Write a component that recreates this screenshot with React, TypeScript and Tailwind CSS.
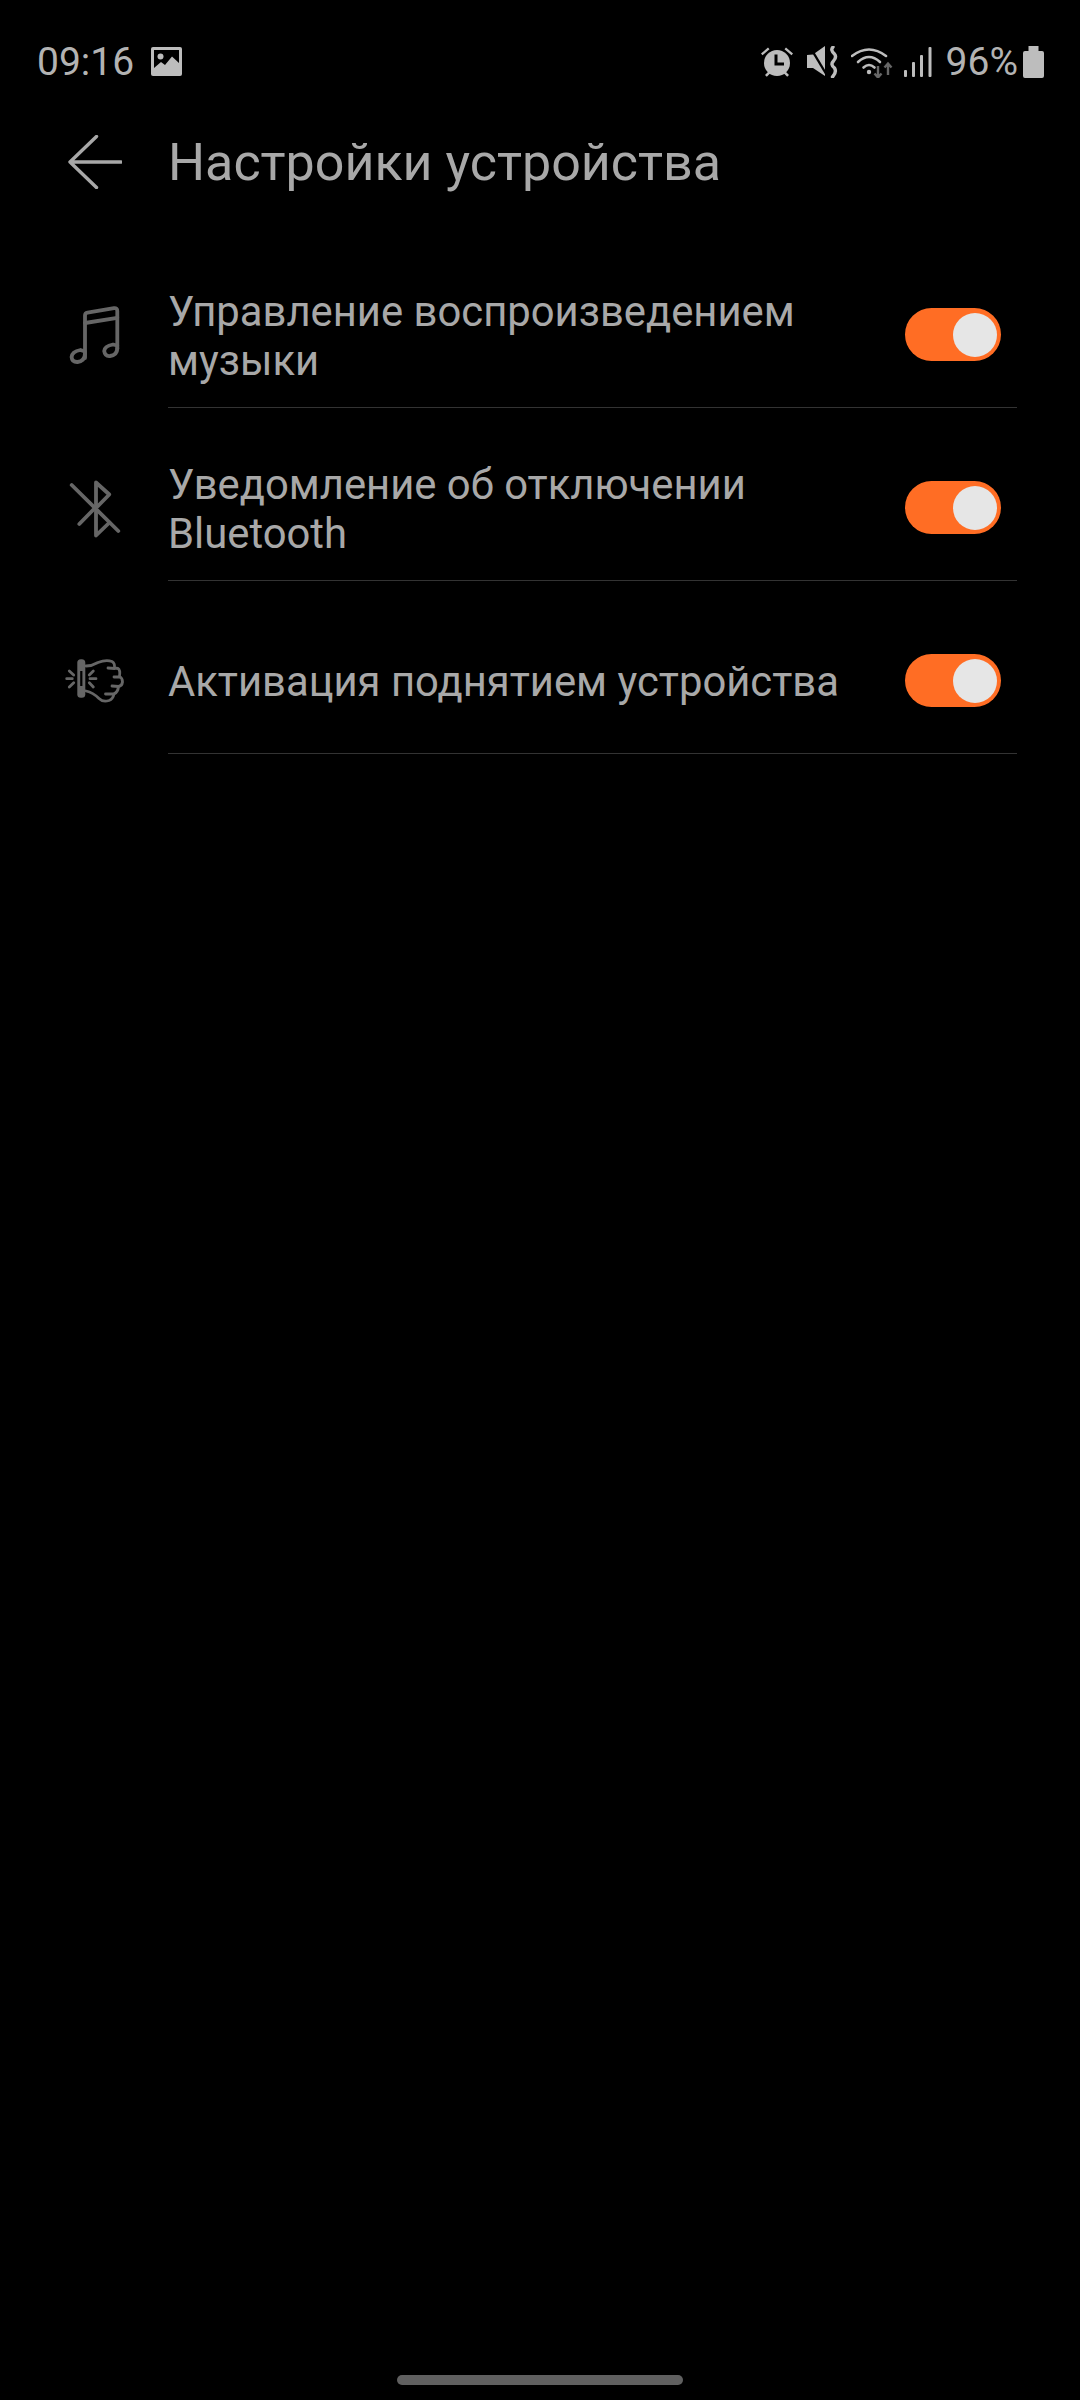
import React from 'react'

const font = "font-['Roboto',sans-serif]"

const Toggle = () => (
    <div className="w-[96px] h-[53px] shrink-0 rounded-full bg-[#ff6d24] flex items-center justify-end pr-[4px]">
        <div className="w-[44px] h-[44px] rounded-full bg-[#e6e6e6]"></div>
    </div>
)

const MusicIcon = () => (
    <svg width="64" height="64" viewBox="0 0 64 64" fill="none" stroke="#666" strokeWidth="3.8" strokeLinecap="round" strokeLinejoin="round">
        <path d="M23 55V12.5Q23 10 25.5 9.6L52 5.2Q55.3 4.8 55.3 8V46" />
        <path d="M23 20L55.3 14.8" />
        <path d="M23 48.5L18.5 47Q10 48.5 9.6 54Q10 59.2 15.5 59Q23 58 23 50" />
        <path d="M55.3 42.5L51 41.5Q42.5 43 42.2 48Q43 53.5 48 53Q55.3 52 55.3 45" />
    </svg>
)

const BluetoothIcon = () => (
    <svg width="64" height="64" viewBox="0 0 64 64" fill="none" stroke="#666" strokeWidth="3.8" strokeLinecap="round" strokeLinejoin="round">
        <path d="M34 30V6.5L47.3 18.5L35.5 30.5" />
        <path d="M17.3 48L31.5 33.5" />
        <path d="M34 35V59.5L47.5 46.5" />
        <path d="M9.7 9L56.3 55" />
    </svg>
)

const FistIcon = () => (
    <svg width="64" height="64" viewBox="0 0 64 64" fill="none" stroke="#666" strokeWidth="2.8" strokeLinecap="round" strokeLinejoin="round">
        <rect x="15.3" y="10.3" width="8" height="38.4" rx="3.5" fill="#666" stroke="none" />
        <rect x="18.2" y="22" width="2.2" height="15" fill="#000" stroke="none" />
        <path d="M24 17Q30 17 36 13.5Q44 10.5 50 12.5Q53 14 52.5 19L56 19.5Q58.5 21 57.5 27.5Q60.5 29 60.5 33Q60 37 56.5 37.5Q56 43 52 45Q51 50 47 51.5Q41 53.5 37 49.5Q31 43.5 24 42" />
        <path d="M52.5 19.5L46 19M57.5 28L52 28M56.5 37.5L50 37M52 45L43.5 45" />
        <path d="M4.7 29.7H10.3M7.3 22L11.7 26M7.3 38L11.7 33.7M28 29.7H34M27.3 26L31.3 22M27.3 33.7L31.3 38" />
    </svg>
)

const rows = [
    { icon: <MusicIcon />, lines: ['Управление воспроизведением', 'музыки'] },
    { icon: <BluetoothIcon />, lines: ['Уведомление об отключении', 'Bluetooth'] },
    { icon: <FistIcon />, lines: ['Активация поднятием устройства'] },
]

const StatusIcons = () => (
    <div className="flex items-center">
        <svg width="34" height="32" viewBox="0 0 34 32" fill="#bdbdbd">
            <circle cx="17" cy="17" r="13" />
            <path d="M14.5 8.5H17.5V16.5H24V19.5H14.5Z" fill="#000" />
            <path d="M1 7.5L8 1.5L9.5 3.3L2.5 9.3ZM33 7.5L26 1.5L24.5 3.3L31.5 9.3Z" />
            <path d="M5 29L9 25L10.8 26.8L6.8 30.8ZM29 29L25 25L23.2 26.8L27.2 30.8Z" />
        </svg>
        <svg width="32" height="32" viewBox="0 0 32 32" fill="none" className="ml-[13px]">
            <path d="M0 9L6 8.5L18 0V30L6 22L0 22Z" fill="#bdbdbd" />
            <path d="M3 1L21 31" stroke="#000" strokeWidth="2.4" />
            <path d="M26 1Q23 4 27.5 8Q30 11 26.5 15Q23 18.5 27.5 22Q30 26 25.5 31" stroke="#bdbdbd" strokeWidth="3.4" strokeLinecap="round" />
        </svg>
        <svg width="42" height="32" viewBox="0 0 42 32" fill="none" className="ml-[12px]">
            <path d="M1 10Q18 -3 35 10" stroke="#bdbdbd" strokeWidth="2.6" strokeLinecap="round" />
            <path d="M7 16Q18 6 29 16" stroke="#bdbdbd" strokeWidth="2.6" strokeLinecap="round" />
            <path d="M12.5 21.5Q18 16.5 23.5 21.5" stroke="#bdbdbd" strokeWidth="2.6" strokeLinecap="round" />
            <circle cx="18" cy="26" r="2.2" fill="#bdbdbd" />
            <path d="M27 20V31M23.5 27.5L27 31.5L30.5 27.5" stroke="#666" strokeWidth="2.4" />
            <path d="M37 29V18M33.5 21.5L37 17.5L40.5 21.5" stroke="#666" strokeWidth="2.4" />
        </svg>
        <svg width="28" height="32" viewBox="0 0 28 32" fill="#bdbdbd" className="ml-[11px]">
            <rect x="0" y="24" width="3" height="7" rx="1" />
            <rect x="8" y="16" width="3" height="15" rx="1" />
            <rect x="16" y="9" width="3" height="22" rx="1" />
            <rect x="24.5" y="1" width="3" height="30" rx="1" />
        </svg>
        <span className="ml-[14px] text-[39px] leading-[46px] text-[#b3b3b3]">96%</span>
        <svg width="21" height="32" viewBox="0 0 21 32" fill="#bdbdbd" className="ml-[5px]">
            <path d="M5.5 0H15.5V5H19Q21 5 21 7V30Q21 32 19 32H2Q0 32 0 30V7Q0 5 2 5H5.5Z" />
        </svg>
    </div>
)

const App = () => {
    return (
        <div className={`${font} w-[1080px] h-[2400px] bg-black flex flex-col`}>
            {/* status bar */}
            <div className="h-[124px] shrink-0 flex items-center justify-between pl-[37px] pr-[36px]">
                <div className="flex items-center">
                    <span className="text-[39px] leading-[46px] text-[#b3b3b3]">09:16</span>
                    <svg width="32" height="30" viewBox="0 0 32 30" className="ml-[17px]">
                        <rect x="0" y="0" width="31" height="29" rx="2" fill="#bdbdbd" />
                        <rect x="3" y="3" width="25" height="23" fill="#000" />
                        <circle cx="9.5" cy="9.5" r="3" fill="#bdbdbd" />
                        <path d="M3 21L10 15L14 18L21 9.5L28 16V26H3Z" fill="#bdbdbd" />
                    </svg>
                </div>
                <StatusIcons />
            </div>

            {/* header */}
            <div className="h-[76px] shrink-0 flex items-center pl-[68px]">
                <svg width="54" height="54" viewBox="0 0 54 54" fill="none" stroke="#a8a8a8" strokeWidth="3.4" strokeLinecap="round" strokeLinejoin="round">
                    <path d="M28.5 1.5L2 27L28.5 52.5M2 27H53" />
                </svg>
                <h1 className="ml-[46px] pt-[2px] text-[52px] leading-[60px] font-normal text-[#a8a8a8]">Настройки устройства</h1>
            </div>

            {/* settings */}
            <div className="mt-[35px] flex flex-col">
                {rows.map((row, i) => (
                    <div key={i} className="flex items-center pl-[62px] pr-[63px] mt-[27px]">
                        <div className="w-[64px] h-[64px] shrink-0">{row.icon}</div>
                        <div className="ml-[42px] flex-1 h-[146px] flex items-center justify-between border-b border-[#333] pr-[16px]">
                            <div className="pt-[2px] text-[41.8px] leading-[49px] text-[#a8a8a8]">
                                {row.lines.map((line) => (
                                    <div key={line}>{line}</div>
                                ))}
                            </div>
                            <Toggle />
                        </div>
                    </div>
                ))}
            </div>

            {/* nav handle */}
            <div className="mt-auto pb-[15px] flex justify-center">
                <div className="w-[286px] h-[10px] rounded-full bg-[#606060]"></div>
            </div>
        </div>
    )
}

export default App
